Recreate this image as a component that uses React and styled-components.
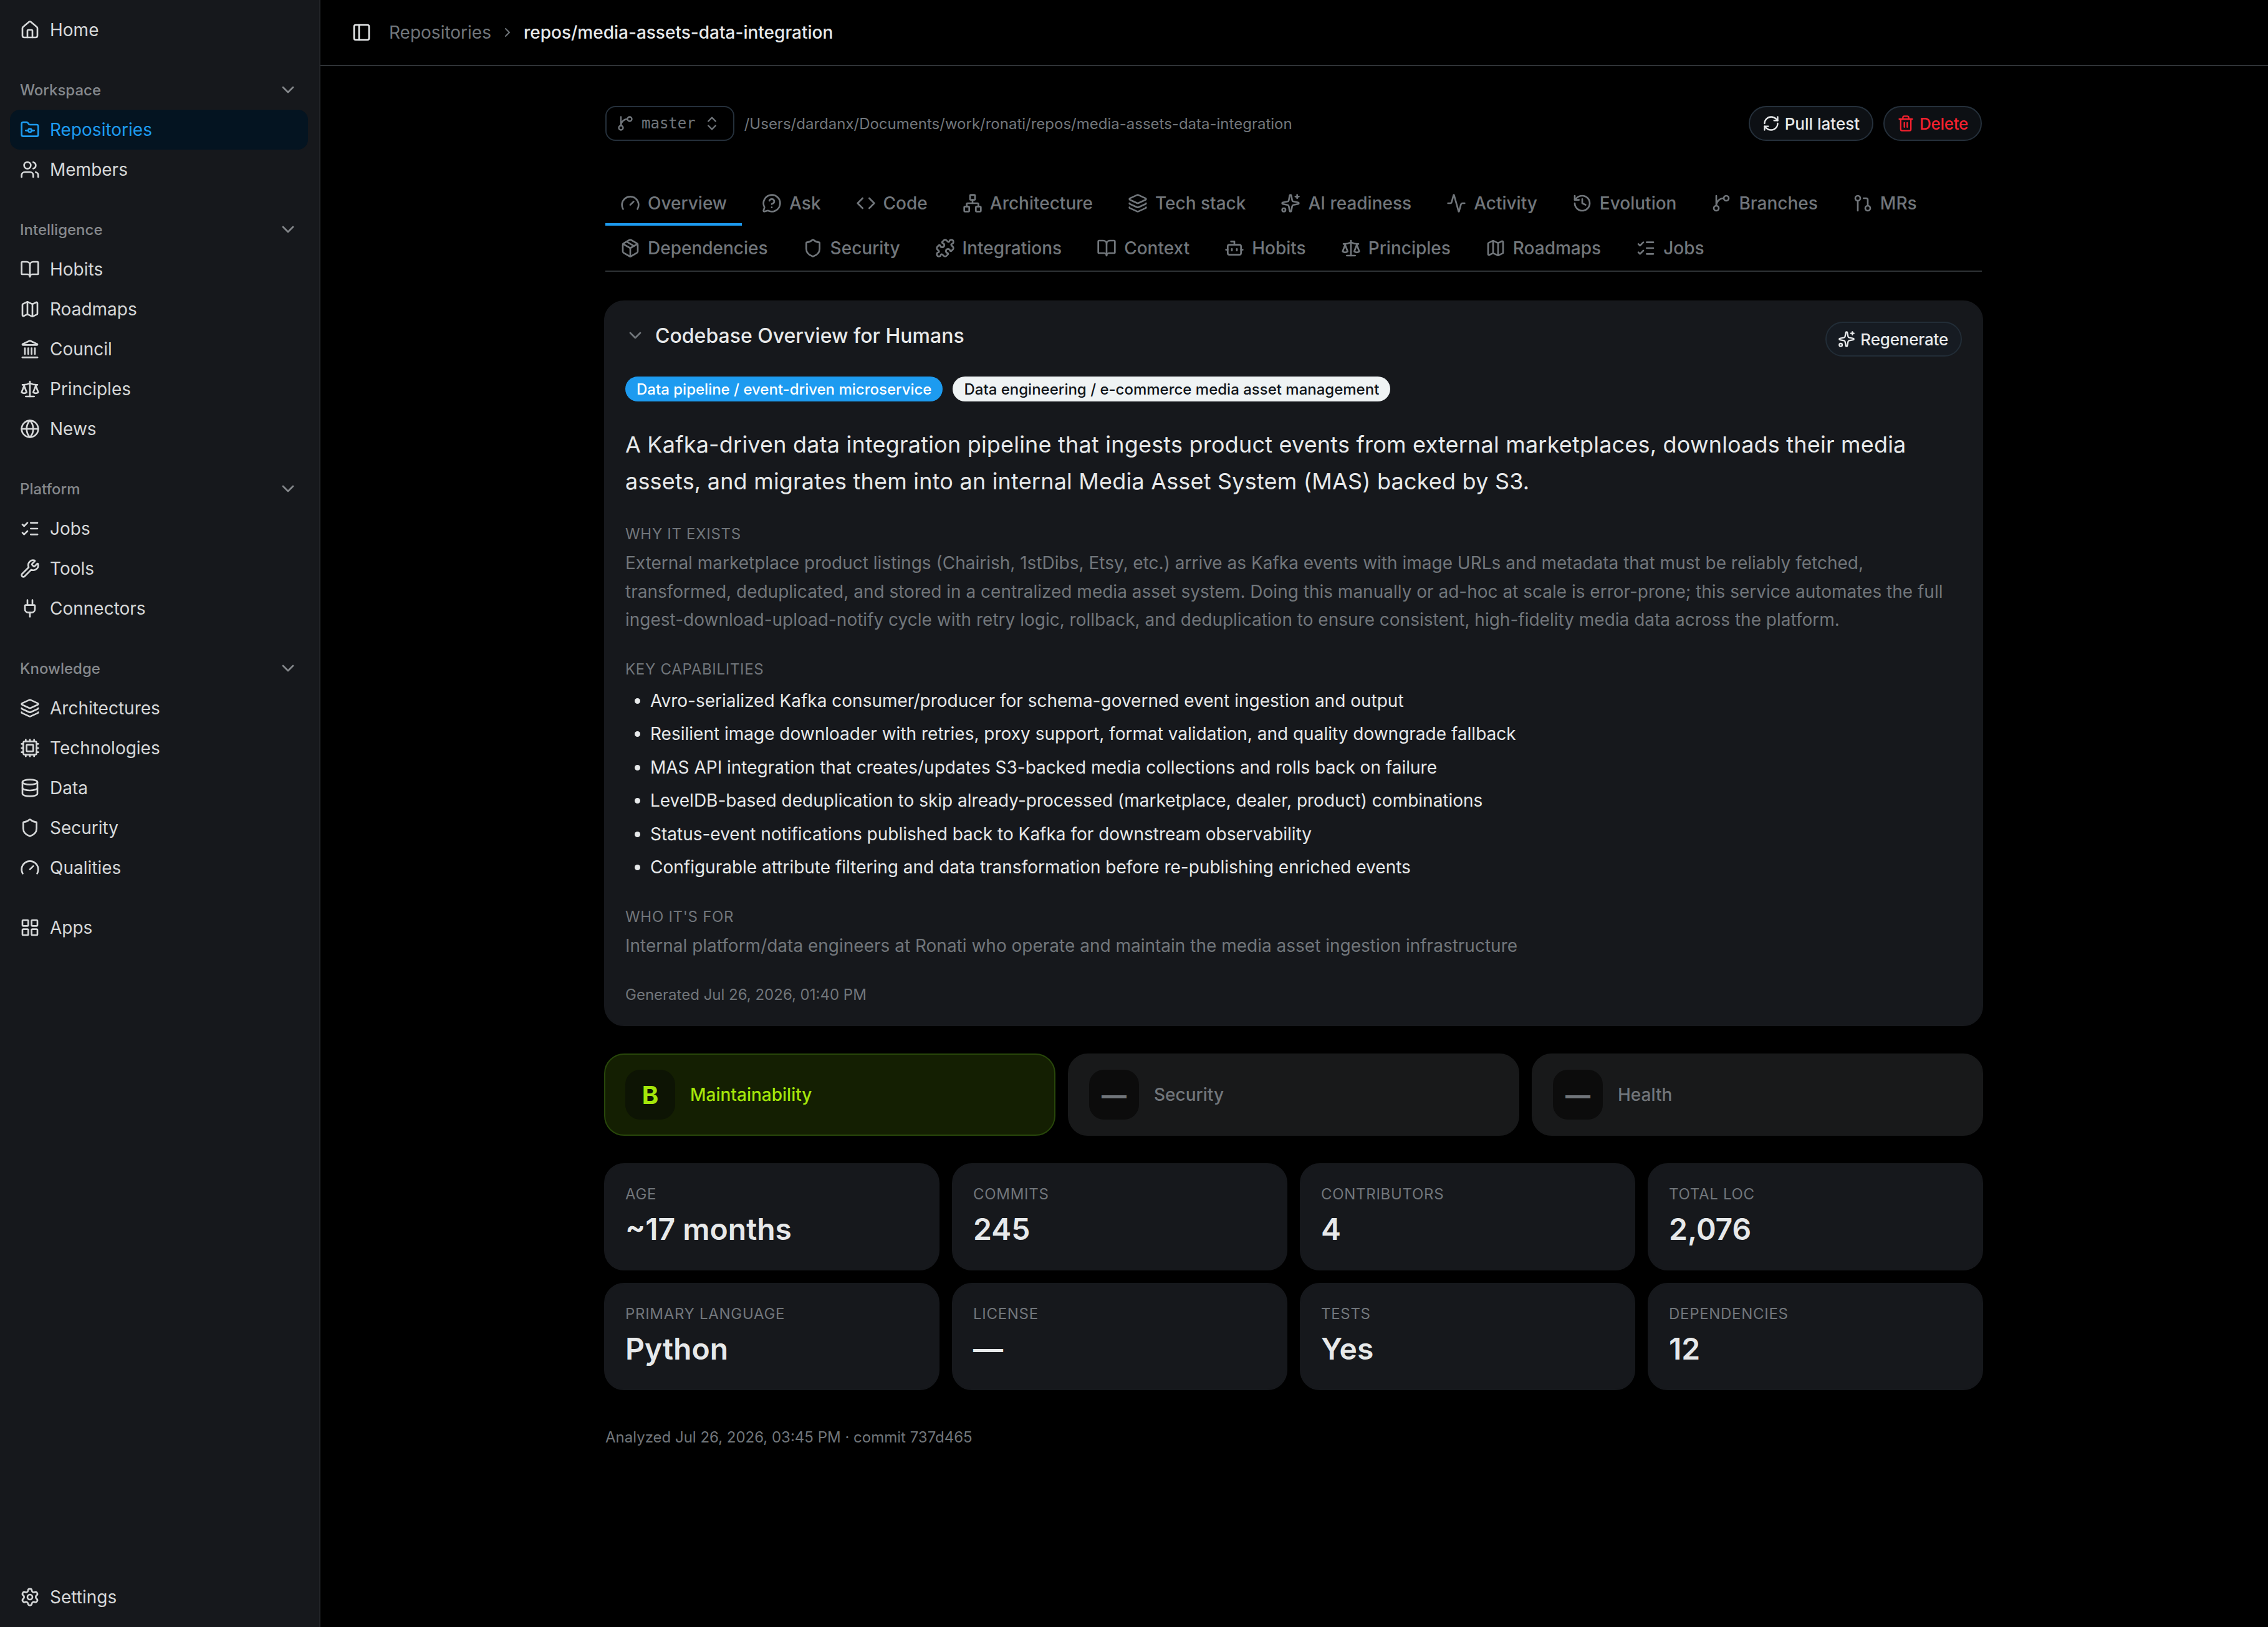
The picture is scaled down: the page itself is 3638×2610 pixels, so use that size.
import React from 'react';
import styled, { createGlobalStyle } from 'styled-components';
import {
  Activity, Bot, BookOpen, ChevronDown, ChevronRight, ChevronsUpDown, Code, Cpu, Database, Gauge,
  GitPullRequest, Globe, History, House, Landmark, Layers, LayoutGrid, ListChecks, Map as MapIcon,
  FolderGit, MessageCircleQuestion, Network, Package, PanelLeft, Plug, Puzzle, RefreshCw, Scale,
  Settings, Shield, Sparkles, Trash2, Users, Wrench,
} from 'lucide-react';

const GlobalStyle = createGlobalStyle`
  * {
    box-sizing: border-box;
  }

  html,
  body {
    margin: 0;
    background: #000;
    color: #e7e9ea;
    font-family: 'Inter', 'Liberation Sans', sans-serif;
  }
`;

// lucide's own git-branch curves the other way round
function BranchIcon({ size }) {
  return (
    <svg
      width={size}
      height={size}
      viewBox='0 0 24 24'
      fill='none'
      stroke='currentColor'
      strokeWidth='2'
      strokeLinecap='round'
      strokeLinejoin='round'
    >
      <circle cx='18' cy='6' r='3' />
      <circle cx='6' cy='18' r='3' />
      <path d='M15 6a9 9 0 0 0-9 9V3' />
    </svg>
  );
}

const navGroups = [
  {
    title: 'Workspace',
    items: [
      { label: 'Repositories', icon: FolderGit, active: true },
      { label: 'Members', icon: Users },
    ],
  },
  {
    title: 'Intelligence',
    items: [
      { label: 'Hobits', icon: BookOpen },
      { label: 'Roadmaps', icon: MapIcon },
      { label: 'Council', icon: Landmark },
      { label: 'Principles', icon: Scale },
      { label: 'News', icon: Globe },
    ],
  },
  {
    title: 'Platform',
    items: [
      { label: 'Jobs', icon: ListChecks },
      { label: 'Tools', icon: Wrench },
      { label: 'Connectors', icon: Plug },
    ],
  },
  {
    title: 'Knowledge',
    items: [
      { label: 'Architectures', icon: Layers },
      { label: 'Technologies', icon: Cpu },
      { label: 'Data', icon: Database },
      { label: 'Security', icon: Shield },
      { label: 'Qualities', icon: Gauge },
    ],
  },
];

const tabs = [
  { label: 'Overview', icon: Gauge, active: true },
  { label: 'Ask', icon: MessageCircleQuestion },
  { label: 'Code', icon: Code },
  { label: 'Architecture', icon: Network },
  { label: 'Tech stack', icon: Layers },
  { label: 'AI readiness', icon: Sparkles },
  { label: 'Activity', icon: Activity },
  { label: 'Evolution', icon: History },
  { label: 'Branches', icon: BranchIcon },
  { label: 'MRs', icon: GitPullRequest },
  { label: 'Dependencies', icon: Package },
  { label: 'Security', icon: Shield },
  { label: 'Integrations', icon: Puzzle },
  { label: 'Context', icon: BookOpen },
  { label: 'Hobits', icon: Bot },
  { label: 'Principles', icon: Scale },
  { label: 'Roadmaps', icon: MapIcon },
  { label: 'Jobs', icon: ListChecks },
];

const capabilities = [
  'Avro-serialized Kafka consumer/producer for schema-governed event ingestion and output',
  'Resilient image downloader with retries, proxy support, format validation, and quality downgrade fallback',
  'MAS API integration that creates/updates S3-backed media collections and rolls back on failure',
  'LevelDB-based deduplication to skip already-processed (marketplace, dealer, product) combinations',
  'Status-event notifications published back to Kafka for downstream observability',
  'Configurable attribute filtering and data transformation before re-publishing enriched events',
];

const stats = [
  { label: 'Age', value: '~17 months' },
  { label: 'Commits', value: '245' },
  { label: 'Contributors', value: '4' },
  { label: 'Total LOC', value: '2,076' },
  { label: 'Primary language', value: 'Python' },
  { label: 'License', value: '—' },
  { label: 'Tests', value: 'Yes' },
  { label: 'Dependencies', value: '12' },
];

function NavRow({ item }) {
  const Icon = item.icon;
  return (
    <NavItem $active={item.active}>
      <Icon size={32} />
      {item.label}
    </NavItem>
  );
}

export default function App() {
  return (
    <>
      <GlobalStyle />
      <Shell>
        <Sidebar>
          <NavRow item={{ label: 'Home', icon: House }} />
          {navGroups.map((group) => (
            <NavGroup key={group.title}>
              <GroupTitle>
                {group.title}
                <ChevronDown size={32} />
              </GroupTitle>
              {group.items.map((item) => (
                <NavRow key={item.label} item={item} />
              ))}
            </NavGroup>
          ))}
          <NavGroup>
            <NavRow item={{ label: 'Apps', icon: LayoutGrid }} />
          </NavGroup>
          <SidebarFoot>
            <NavRow item={{ label: 'Settings', icon: Settings }} />
          </SidebarFoot>
        </Sidebar>

        <Main>
          <TopBar>
            <PanelLeft size={32} color='#e7e9ea' />
            <Crumbs>
              <CrumbMuted>Repositories</CrumbMuted>
              <ChevronRight size={24} color='#71767b' />
              <CrumbCurrent>repos/media-assets-data-integration</CrumbCurrent>
            </Crumbs>
          </TopBar>

          <Content>
            <Toolbar>
              <BranchSelect>
                <BranchIcon size={28} />
                <BranchName>master</BranchName>
                <ChevronsUpDown size={28} />
              </BranchSelect>
              <RepoPath>/Users/dardanx/Documents/work/ronati/repos/media-assets-data-integration</RepoPath>
              <ToolbarActions>
                <PillButton>
                  <RefreshCw size={28} />
                  Pull latest
                </PillButton>
                <PillButton $danger>
                  <Trash2 size={28} />
                  Delete
                </PillButton>
              </ToolbarActions>
            </Toolbar>

            <TabBar>
              {tabs.map((tab) => {
                const Icon = tab.icon;
                return (
                  <Tab key={tab.label} $active={tab.active}>
                    <Icon size={32} />
                    {tab.label}
                  </Tab>
                );
              })}
            </TabBar>

            <OverviewCard>
              <OverviewHead>
                <OverviewTitle>
                  <ChevronDown size={32} color='#71767b' />
                  Codebase Overview for Humans
                </OverviewTitle>
                <RegenerateButton>
                  <Sparkles size={28} />
                  Regenerate
                </RegenerateButton>
              </OverviewHead>

              <BadgeRow>
                <Badge $primary>Data pipeline / event-driven microservice</Badge>
                <Badge>Data engineering / e-commerce media asset management</Badge>
              </BadgeRow>

              <Summary>
                A Kafka-driven data integration pipeline that ingests product events from external marketplaces,
                downloads their media assets, and migrates them into an internal Media Asset System (MAS) backed by
                S3.
              </Summary>

              <Section>
                <SectionLabel>Why it exists</SectionLabel>
                <SectionText>
                  External marketplace product listings (Chairish, 1stDibs, Etsy, etc.) arrive as Kafka events with
                  image URLs and metadata that must be reliably fetched, transformed, deduplicated, and stored in a
                  centralized media asset system. Doing this manually or ad-hoc at scale is error-prone; this service
                  automates the full ingest-download-upload-notify cycle with retry logic, rollback, and deduplication
                  to ensure consistent, high-fidelity media data across the platform.
                </SectionText>
              </Section>

              <Section>
                <SectionLabel>Key capabilities</SectionLabel>
                <CapabilityList>
                  {capabilities.map((text) => (
                    <li key={text}>{text}</li>
                  ))}
                </CapabilityList>
              </Section>

              <Section>
                <SectionLabel>Who it's for</SectionLabel>
                <SectionText>
                  Internal platform/data engineers at Ronati who operate and maintain the media asset ingestion
                  infrastructure
                </SectionText>
              </Section>

              <Generated>Generated Jul 26, 2026, 01:40 PM</Generated>
            </OverviewCard>

            <GradeGrid>
              <GradeCard $good>
                <GradeChip $good>B</GradeChip>
                Maintainability
              </GradeCard>
              <GradeCard>
                <GradeChip>—</GradeChip>
                Security
              </GradeCard>
              <GradeCard>
                <GradeChip>—</GradeChip>
                Health
              </GradeCard>
            </GradeGrid>

            <StatGrid>
              {stats.map((stat) => (
                <StatCard key={stat.label}>
                  <StatLabel>{stat.label}</StatLabel>
                  <StatValue>{stat.value}</StatValue>
                </StatCard>
              ))}
            </StatGrid>

            <AnalyzedNote>Analyzed Jul 26, 2026, 03:45 PM · commit 737d465</AnalyzedNote>
          </Content>
        </Main>
      </Shell>
    </>
  );
}

const Shell = styled.div`
  display: flex;
  width: 3638px;
  height: 2610px;
  overflow: hidden;
`;

const Sidebar = styled.aside`
  display: flex;
  flex-direction: column;
  flex: none;

  width: 514px;
  padding: 16px 18px 16px 16px;

  background-color: #16181c;
  border-right: 2px solid #222428;
`;

const NavItem = styled.div`
  display: flex;
  align-items: center;
  gap: 16px;

  height: 64px;
  padding: 0 16px;

  font-size: 28px;
  color: ${(props) => (props.$active ? '#1d9bf0' : '#d6d8d9')};
  background-color: ${(props) => (props.$active ? '#041421' : 'transparent')};
  border-radius: 16px;

  svg {
    flex: none;
  }
`;

const NavGroup = styled.section`
  margin-top: 32px;
`;

const GroupTitle = styled.div`
  display: flex;
  align-items: center;
  justify-content: space-between;

  height: 64px;
  padding: 0 16px;

  font-size: 24px;
  font-weight: 500;
  color: #85888c;
`;

const SidebarFoot = styled.div`
  margin-top: auto;
`;

const Main = styled.main`
  display: flex;
  flex-direction: column;
  flex: 1;
  min-width: 0;
  padding-right: 2px;
`;

const TopBar = styled.header`
  display: flex;
  align-items: center;
  gap: 28px;

  height: 106px;
  margin-right: -2px;
  padding: 0 50px;

  border-bottom: 2px solid #2f3336;
`;

const Crumbs = styled.nav`
  display: flex;
  align-items: center;
  gap: 14px;

  font-size: 28px;
`;

const CrumbMuted = styled.span`
  color: #71767b;
`;

const CrumbCurrent = styled.span`
  font-weight: 500;
  color: #e7e9ea;
`;

const Content = styled.div`
  width: 2208px;
  margin: 0 auto;
  padding-top: 64px;
`;

const Toolbar = styled.div`
  display: flex;
  align-items: center;
  gap: 16px;
`;

const BranchSelect = styled.div`
  display: flex;
  align-items: center;
  gap: 12px;

  height: 56px;
  padding: 0 20px 0 16px;

  color: #71767b;
  border: 2px solid #25303b;
  border-radius: 16px;
`;

const BranchName = styled.span`
  font-family: 'DejaVu Sans Mono', 'Liberation Mono', monospace;
  font-size: 24px;
`;

const RepoPath = styled.span`
  font-size: 24px;
  color: #71767b;
`;

const ToolbarActions = styled.div`
  display: flex;
  gap: 16px;
  margin-left: auto;
`;

const PillButton = styled.button`
  display: flex;
  align-items: center;
  gap: 8px;

  height: 56px;
  padding: 0 20px;

  font-family: inherit;
  font-size: 26px;
  font-weight: 500;
  letter-spacing: ${(props) => (props.$danger ? '-0.3px' : '0')};
  color: ${(props) => (props.$danger ? '#f4212e' : '#e7e9ea')};
  background-color: #0d1014;
  border: 2px solid #25303b;
  border-radius: 28px;
`;

const TabBar = styled.div`
  display: flex;
  flex-wrap: wrap;
  column-gap: 8px;

  margin-top: 64px;

  border-bottom: 2px solid #2f3336;
`;

const Tab = styled.div`
  display: flex;
  align-items: center;
  gap: 12px;

  height: 72px;
  padding: 0 24px;

  font-size: 28px;
  font-weight: 500;
  color: #71767b;
  border-top: 4px solid transparent;
  border-bottom: 4px solid ${(props) => (props.$active ? '#1d9bf0' : 'transparent')};
`;

const OverviewCard = styled.article`
  margin: 46px -2px 0;
  padding: 32px;

  background-color: #16181c;
  border: 2px solid #16181c;
  border-radius: 32px;
`;

const OverviewHead = styled.div`
  display: flex;
  align-items: flex-start;
  justify-content: space-between;
`;

const OverviewTitle = styled.h2`
  display: flex;
  align-items: center;
  gap: 16px;

  height: 44px;
  margin: 0;

  font-size: 32px;
  font-weight: 500;
  color: #e7e9ea;
`;

const RegenerateButton = styled(PillButton)`
  padding: 0 20px 0 18px;

  letter-spacing: -0.2px;
  background-color: #161b22;
  border-color: #222d37;
`;

const BadgeRow = styled.div`
  display: flex;
  gap: 16px;
  margin-top: 32px;
`;

const Badge = styled.span`
  display: inline-flex;
  align-items: center;

  height: 40px;
  padding: 0 18px;

  font-size: 24px;
  font-weight: 500;
  color: ${(props) => (props.$primary ? '#fff' : '#0f1419')};
  background-color: ${(props) => (props.$primary ? '#1d9bf0' : '#eff3f4')};
  border-radius: 20px;
`;

const Summary = styled.p`
  margin: 40px 0 0;

  font-size: 36px;
  line-height: 58.5px;
  letter-spacing: 0.2px;
  color: #e7e9ea;
`;

const Section = styled.section`
  margin-top: 40px;
`;

const SectionLabel = styled.div`
  font-size: 24px;
  line-height: 32px;
  letter-spacing: 0.7px;
  text-transform: uppercase;
  color: #71767b;
`;

const SectionText = styled.p`
  margin: 8px 0 0;

  font-size: 28px;
  line-height: 45.5px;
  color: #71767b;
`;

const CapabilityList = styled.ul`
  display: flex;
  flex-direction: column;
  gap: 8px;

  margin: 12px 0 0;
  padding: 0;

  list-style: none;

  li {
    display: flex;
    align-items: center;
    gap: 16px;

    padding-left: 15px;

    font-size: 28px;
    line-height: 45.5px;
    color: #e7e9ea;
  }

  li::before {
    content: '';
    flex: none;
    width: 9px;
    height: 9px;
    background-color: #e7e9ea;
    border-radius: 50%;
  }
`;

const Generated = styled.div`
  margin-top: 40px;

  font-size: 24px;
  line-height: 32px;
  color: #71767b;
`;

const GradeGrid = styled.div`
  display: grid;
  grid-template-columns: repeat(3, 1fr);
  gap: 20px;

  margin: 44px -2px 0;
`;

const GradeCard = styled.div`
  display: flex;
  align-items: center;
  gap: 24px;

  height: 132px;
  padding: 0 32px;

  font-size: 28px;
  font-weight: 500;
  color: ${(props) => (props.$good ? '#a3e60a' : '#71767b')};
  background-color: ${(props) => (props.$good ? '#141f02' : '#18191a')};
  border: 2px solid ${(props) => (props.$good ? '#28470a' : '#18191a')};
  border-radius: 32px;
`;

const GradeChip = styled.span`
  display: flex;
  align-items: center;
  justify-content: center;

  width: 80px;
  height: 80px;

  font-size: 40px;
  font-weight: 700;
  color: inherit;
  background-color: ${(props) => (props.$good ? '#0d1404' : '#0c0c0c')};
  border-radius: 24px;
`;

const StatGrid = styled.div`
  display: grid;
  grid-template-columns: repeat(4, 1fr);
  gap: 20px;

  margin: 44px -2px 0;
`;

const StatCard = styled.div`
  height: 172px;
  padding: 32px;

  background-color: #16181c;
  border: 2px solid #16181c;
  border-radius: 32px;
`;

const StatLabel = styled.div`
  font-size: 24px;
  line-height: 32px;
  letter-spacing: 0.7px;
  text-transform: uppercase;
  color: #71767b;
`;

const StatValue = styled.div`
  margin-top: 8px;

  font-size: 48px;
  font-weight: 600;
  line-height: 64px;
  color: #e7e9ea;
`;

const AnalyzedNote = styled.div`
  margin-top: 60px;

  font-size: 24px;
  line-height: 32px;
  color: #71767b;
`;
